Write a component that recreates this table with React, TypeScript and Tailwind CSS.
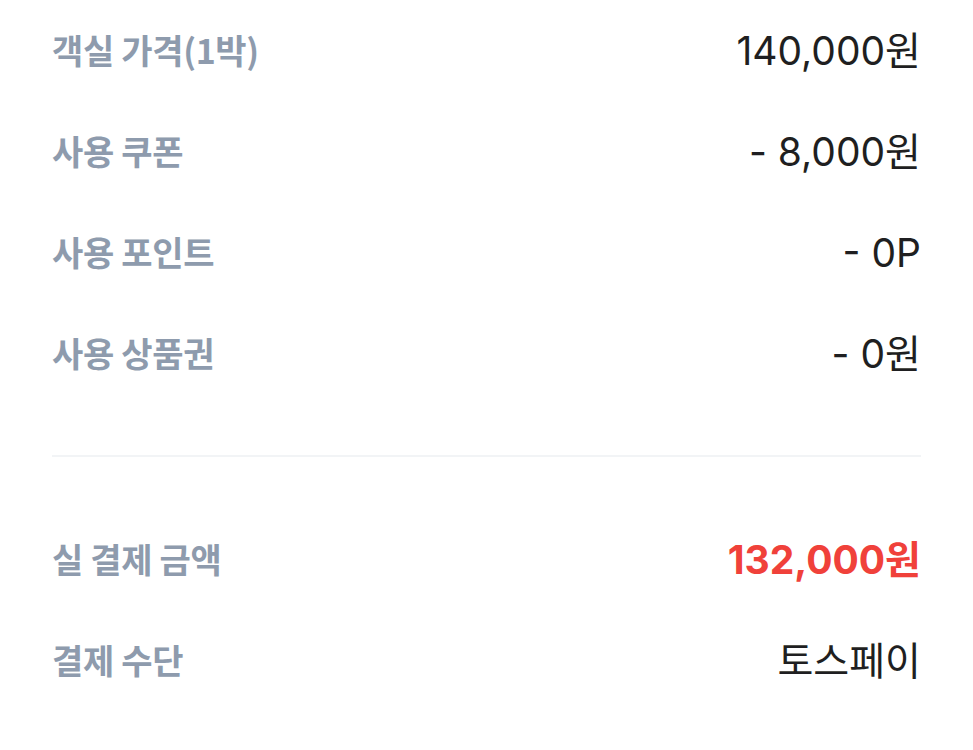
const rows1 = [
  { label: "객실 가격(1박)", value: "140,000원" },
  { label: "사용 쿠폰", value: "- 8,000원" },
  { label: "사용 포인트", value: "- 0P" },
  { label: "사용 상품권", value: "- 0원" },
]

function Row({ label, value, className = "text-[#1f1f21] font-normal" }: { label: string; value: string; className?: string }) {
  return (
    <div className="flex h-[101px] items-center justify-between pb-[2px]">
      <span className="text-[34px] font-semibold tracking-[-0.01em] text-[#8e9bad]">{label}</span>
      <span className={`mt-[4px] font-['Inter','Noto_Sans_CJK_KR',sans-serif] text-[39px] ${className}`}>{value}</span>
    </div>
  )
}

export default function App() {
  return (
    <div className="min-h-screen bg-white px-[52px] font-['Noto_Sans_CJK_KR',sans-serif]">
      {rows1.map((r) => (
        <Row key={r.label} label={r.label} value={r.value} />
      ))}
      <div className="mt-[51px] mb-[49px] h-[2px] bg-[#f2f4f6]" />
      <div className="pt-[3px]">
        <Row label="실 결제 금액" value="132,000원" className="font-bold text-[#f0413a]" />
        <Row label="결제 수단" value="토스페이" />
      </div>
    </div>
  )
}
